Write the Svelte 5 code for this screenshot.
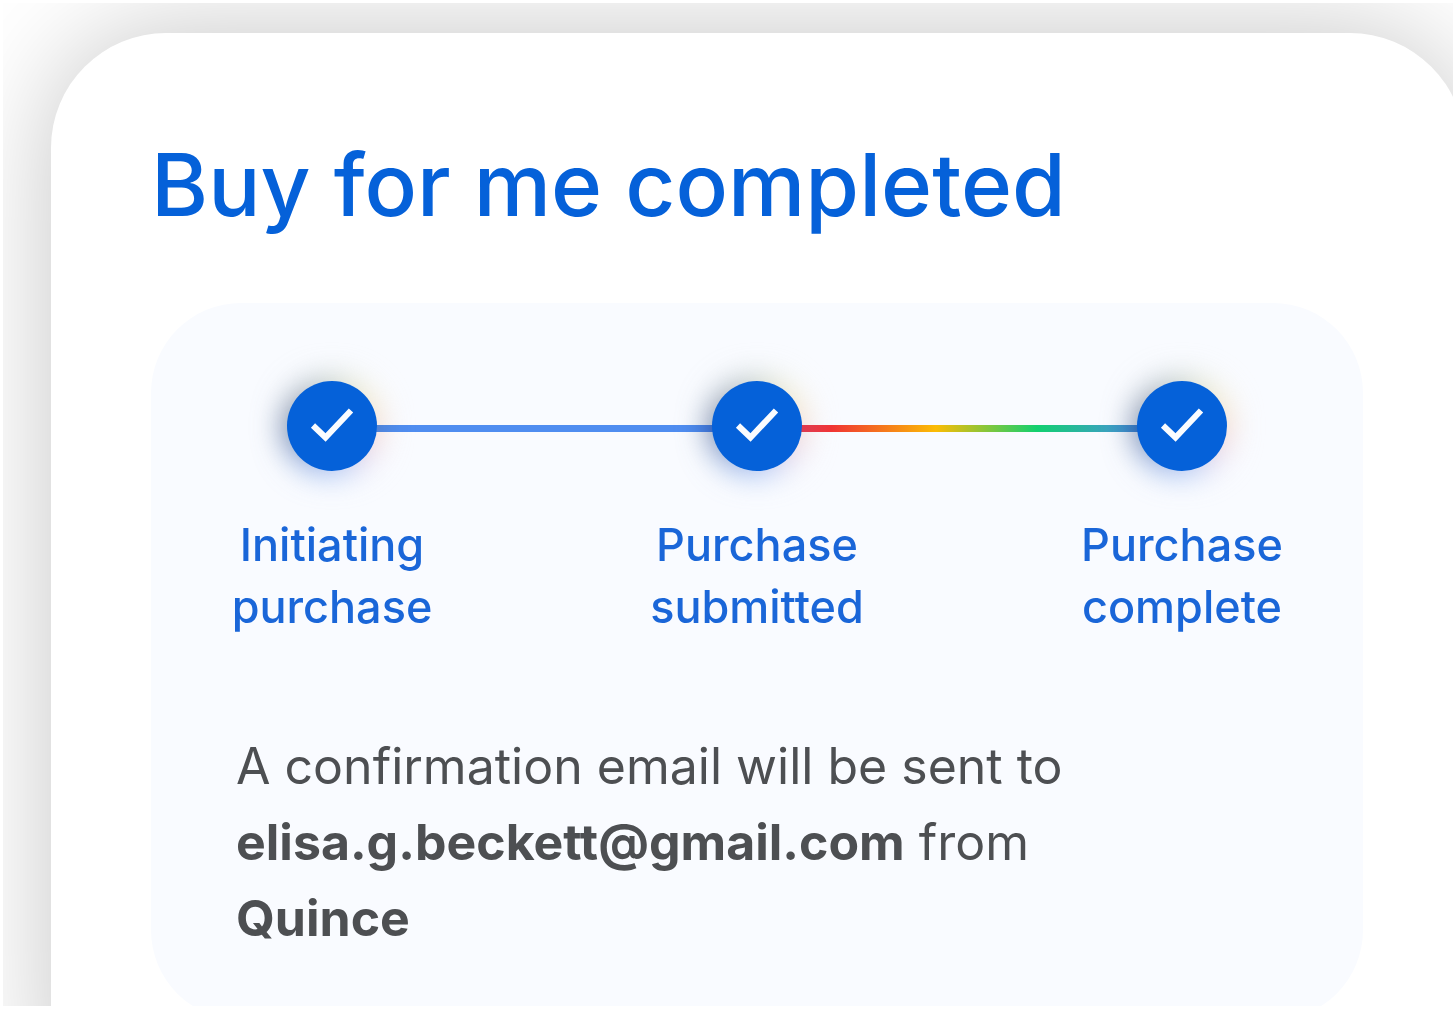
<script>
    const steps = [
        { lines: ["Initiating", "purchase"], connector: "solid" },
        { lines: ["Purchase", "submitted"], connector: "rainbow" },
        { lines: ["Purchase", "complete"], connector: null },
    ];
    const email = "elisa.g.beckett@gmail.com";
    const merchant = "Quince";
</script>

<main>
    <div class="backdrop">
        <section class="sheet">
            <h1>Buy for me completed</h1>

            <div class="panel">
                <ol class="steps">
                    {#each steps as step}
                        <li class="step">
                            <span class="badge">
                                <svg viewBox="0 0 90 90" aria-hidden="true">
                                    <circle cx="45" cy="45" r="45" fill="#0561d9" />
                                    <path
                                        d="M26 44.5 L38.5 56.5 L64 29.5"
                                        fill="none"
                                        stroke="#fafcff"
                                        stroke-width="6"
                                    />
                                </svg>
                            </span>
                            <span class="label">
                                {step.lines[0]}<br />{step.lines[1]}
                            </span>
                        </li>
                        {#if step.connector}
                            <li class="connector {step.connector}" aria-hidden="true"></li>
                        {/if}
                    {/each}
                </ol>

                <p>
                    A confirmation email will be sent to<br />
                    <strong>{email}</strong> from<br />
                    <strong>{merchant}</strong>
                </p>
            </div>
        </section>
    </div>
</main>

<style>
    :global(body) {
        background: #fff;
    }

    main {
        box-sizing: border-box;
        height: 100vh;
        padding: 3px;
        font-family: "Inter", "Liberation Sans", sans-serif;
        overflow: hidden;
    }

    .backdrop {
        box-sizing: border-box;
        height: 100%;
        padding: 30px 0 0 48px;
        overflow: hidden;
    }

    .sheet {
        box-sizing: border-box;
        min-height: 100%;
        margin-right: -12px;
        padding: 102px 102px 120px 100px;
        border-radius: 115px;
        background: #fff;
        box-shadow: 0 0 112px rgba(0, 0, 0, 0.23);
    }

    h1 {
        margin: 0 0 68px;
        color: #0561d9;
        font-size: 87px;
        line-height: 100px;
        font-weight: 500;
        white-space: nowrap;
    }

    .panel {
        padding: 78px 71px 64px;
        border-radius: 90px;
        background: #f9fbff;
    }

    .steps {
        display: flex;
        align-items: flex-start;
        margin: 0 0 90px;
        padding: 0;
        list-style: none;
    }

    .step {
        display: flex;
        flex-direction: column;
        align-items: center;
        flex: 0 0 220px;
        gap: 43px;
    }

    .badge {
        position: relative;
        width: 90px;
        height: 90px;
    }

    /* soft multicolour glow behind the tick */
    .badge::before {
        content: "";
        position: absolute;
        inset: -4px;
        border-radius: 50%;
        background: conic-gradient(
            #b9c6b8,
            #f5e9b0 50deg,
            #f9cfb0 85deg,
            #f0c3d3 120deg,
            #8fb4f5 170deg,
            #5b87d4 215deg,
            #2c4878 265deg,
            #7d8a94 315deg,
            #b9c6b8
        );
        filter: blur(15px);
        opacity: 0.7;
        mix-blend-mode: multiply;
    }

    .badge svg {
        position: relative;
        display: block;
        width: 100%;
        height: 100%;
    }

    .label {
        color: #1a66d8;
        font-size: 45px;
        line-height: 62px;
        font-weight: 500;
        text-align: center;
        white-space: nowrap;
    }

    .connector {
        flex: 1;
        height: 7px;
        margin: 44px -66px 0;
    }

    .solid {
        background: #4f8df0;
    }

    .rainbow {
        background: linear-gradient(
            to right,
            #e0405a,
            #f03434 9%,
            #fbbc05 40%,
            #12d070 70%,
            #4a90e0
        );
    }

    p {
        margin: 0 14px;
        color: #4d4f52;
        font-size: 50px;
        line-height: 76px;
        white-space: nowrap;
    }

    strong {
        font-weight: 700;
    }
</style>
